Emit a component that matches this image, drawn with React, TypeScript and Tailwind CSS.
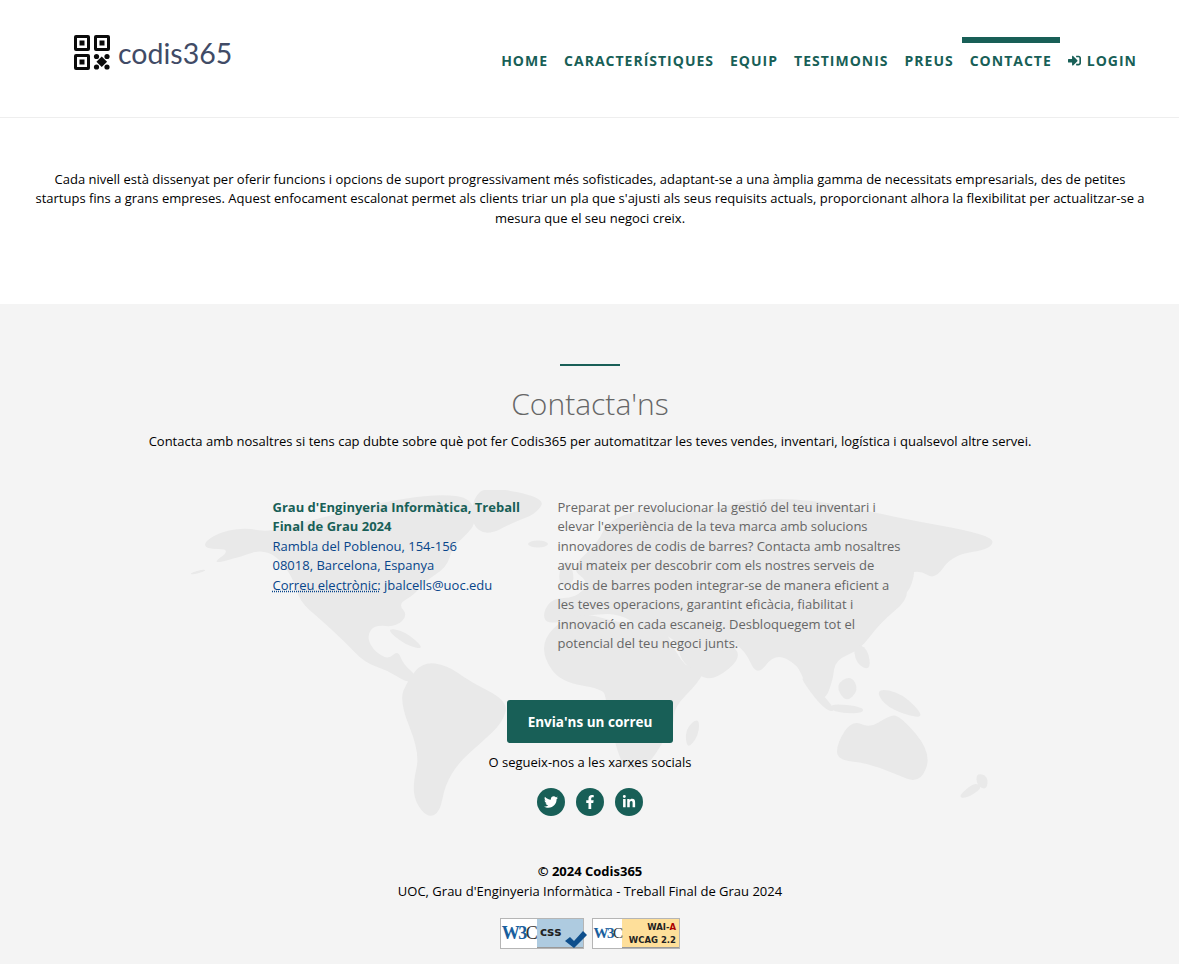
import React from "react";
import { FaFacebookF, FaLinkedinIn, FaSignInAlt, FaTwitter } from "react-icons/fa";

const navItems = ["HOME", "CARACTERÍSTIQUES", "EQUIP", "TESTIMONIS", "PREUS", "CONTACTE"];

const landShapes = [
  // North America
  "205,541 223,531 247,528 267,532 290,526 320,518 353,510 393,500 440,494 472,498 476,523 466,535 452,548 447,567 424,582 414,595 398,604 408,615 396,627 375,625 367,635 372,649 388,660 398,650 403,664 418,677 409,684 387,670 365,663 345,642 320,619 300,602 293,578 277,556 260,550 243,556 210,565 232,549 205,549",
  // Aleutians
  "190,573 204,569 206,571 192,575",
  // South America
  "408,680 423,662 447,665 469,681 508,701 503,722 482,742 459,762 445,785 440,812 428,818 415,802 413,783 420,753 399,701",
  // Greenland
  "473,498 487,486 546,498 536,514 514,522 487,536 471,524",
  // Eurasia
  "543,612 553,598 575,598 590,583 570,568 598,543 608,520 650,507 700,513 760,497 830,502 893,517 993,535 992,549 952,555 935,580 920,570 903,575 910,598 880,623 860,650 835,660 833,680 824,703 804,682 798,665 775,653 757,677 745,650 727,640 743,657 715,680 698,676 680,659 678,642 660,632 640,627 620,614 595,614 570,620 546,624",
  // Africa
  "544,638 544,659 561,682 603,689 606,699 615,745 626,772 647,767 665,739 674,725 674,707 699,682 706,666 689,670 674,650 665,628 640,625 615,622 590,614 563,619",
  // Madagascar
  "685,729 699,717 699,735 687,750",
  // Australia
  "837,743 852,720 870,728 887,717 899,714 932,753 920,784 893,773 867,763 837,760",
  // Indonesia and New Guinea
  "798,675 812,683 838,712 824,710",
  "830,703 864,707 862,714 832,712",
  "835,685 851,675 859,690 846,703",
  "876,688 902,693 926,718 905,715 883,704",
  "853,643 868,648 871,671 856,664",
  // Japan
  "896,592 908,567 916,570 908,595",
  // New Zealand
  "958,796 975,782 983,788 965,799",
  "976,773 988,776 987,790 977,786",
  // Cuba
  "385,628 405,631 426,650 405,645",
  // UK
  "558,572 568,557 576,582 561,588",
];

// rounds the corners of a land outline so the coast does not look spiky
function smoothPath(points: string) {
  const pts = points.split(" ").map((p) => p.split(",").map(Number));
  const mid = (a: number[], b: number[]) => `${(a[0] + b[0]) / 2},${(a[1] + b[1]) / 2}`;
  let d = `M${mid(pts[pts.length - 1], pts[0])}`;
  pts.forEach((p, i) => {
    d += ` Q${p[0]},${p[1]} ${mid(p, pts[(i + 1) % pts.length])}`;
  });
  return d + " Z";
}

function QrLogo() {
  const finders = [
    [0, 0],
    [20, 0],
    [0, 19],
  ];
  return (
    <svg width="36" height="35" viewBox="0 0 36 35" className="shrink-0">
      {finders.map(([x, y]) => (
        <g key={`${x}-${y}`}>
          <rect x={x} y={y} width="16" height="16" rx="2" fill="#0b0b0b" />
          <rect x={x + 3} y={y + 3} width="10" height="10" fill="#fff" />
          <rect x={x + 5.5} y={y + 5.5} width="5" height="5" fill="#0b0b0b" />
        </g>
      ))}
      <circle cx="22.5" cy="21.5" r="2.6" fill="#0b0b0b" />
      <circle cx="33" cy="21.5" r="2.6" fill="#0b0b0b" />
      <circle cx="22.5" cy="32" r="2.6" fill="#0b0b0b" />
      <circle cx="33" cy="32" r="2.6" fill="#0b0b0b" />
      <rect x="24" y="23" width="7.5" height="7.5" transform="rotate(45 27.75 26.75)" fill="#0b0b0b" />
    </svg>
  );
}

function W3cMark({ size }: { size: string }) {
  return (
    <span className={`flex items-center font-['Liberation_Serif',serif] font-bold tracking-[-1.5px] ${size}`}>
      <span className="text-[#1a5f9e]">W3</span>
      <span className="font-normal text-[#333]">C</span>
    </span>
  );
}

export default function App() {
  return (
    <div className="font-['Open_Sans',sans-serif] text-[13px] leading-[19.5px] text-black bg-white">
      {/* Header */}
      <header className="flex justify-between h-[118px] border-b border-[#eeeeee] pl-[74px] pr-[34px]">
        <a className="flex items-start gap-[8px] pt-[35px]">
          <QrLogo />
          <span className="font-['Lato',sans-serif] text-[28.5px] leading-[36px] text-[#414b66]">codis365</span>
        </a>
        <nav className="flex items-start pt-[37px] text-[14px] leading-[21px] font-bold tracking-[1px] text-[#185f57]">
          {navItems.map((item) => (
            <a
              key={item}
              className={`border-t-[6px] pt-[7px] px-[8px] ${item === "CONTACTE" ? "border-[#185f57]" : "border-transparent"}`}
            >
              {item}
            </a>
          ))}
          <a className="flex items-center gap-[6px] border-t-[6px] border-transparent pt-[7px] px-[8px]">
            <FaSignInAlt className="w-[13px] h-[13px]" />
            LOGIN
          </a>
        </nav>
      </header>

      {/* Intro */}
      <section className="pl-[31px] pr-[30px] pt-[51.5px] pb-[75.5px] text-center">
        <p>
          Cada nivell està dissenyat per oferir funcions i opcions de suport progressivament més sofisticades, adaptant-se a una àmplia gamma de necessitats empresarials, des de petites startups fins a grans empreses. Aquest enfocament escalonat permet als clients triar un pla que s'ajusti als seus requisits actuals, proporcionant alhora la flexibilitat per actualitzar-se a mesura que el seu negoci creix.
        </p>
      </section>

      {/* Contact */}
      <footer className="relative bg-[#f4f4f4] pt-[60px] pb-[15px] text-center">
        <svg
          width="820"
          height="340"
          viewBox="180 490 820 340"
          className="absolute left-[180px] top-[186px]"
        >
          {landShapes.map((points) => (
            <path key={points} d={smoothPath(points)} fill="#e9e9e9" />
          ))}
          <ellipse cx="538" cy="544" rx="10" ry="3.5" fill="#e9e9e9" />
        </svg>

        <div className="relative pl-[1px]">
          <div className="mx-auto w-[60px] h-[2px] bg-[#185f57]" />
          <h2 className="mt-[15px] text-[30px] leading-[45px] font-light text-[#666666]">Contacta'ns</h2>
          <p className="mt-[6px]">
            Contacta amb nosaltres si tens cap dubte sobre què pot fer Codis365 per automatitzar les teves vendes, inventari, logística i qualsevol altre servei.
          </p>

          <div className="mt-[46.5px] flex justify-center gap-[30px] text-left">
            <div className="w-[255px] text-[#07458a]">
              <p className="font-bold text-[#185f57]">Grau d'Enginyeria Informàtica, Treball Final de Grau 2024</p>
              <p>Rambla del Poblenou, 154-156</p>
              <p>08018, Barcelona, Espanya</p>
              <p>
                <abbr className="underline decoration-dotted">Correu electrònic:</abbr> jbalcells@uoc.edu
              </p>
            </div>
            <p className="w-[350px] text-[#666666]">
              Preparat per revolucionar la gestió del teu inventari i elevar l'experiència de la teva marca amb solucions innovadores de codis de barres? Contacta amb nosaltres avui mateix per descobrir com els nostres serveis de codis de barres poden integrar-se de manera eficient a les teves operacions, garantint eficàcia, fiabilitat i innovació en cada escaneig. Desbloquegem tot el potencial del teu negoci junts.
            </p>
          </div>

          <button className="mt-[46px] h-[43px] w-[166px] rounded-[3px] bg-[#185f57] pt-[4px] text-[13.5px] font-bold text-white">
            Envia'ns un correu
          </button>
          <p className="mt-[10px]">O segueix-nos a les xarxes socials</p>

          <div className="mt-[16px] flex justify-center gap-[11px]">
            {[FaTwitter, FaFacebookF, FaLinkedinIn].map((Icon, i) => (
              <a key={i} className="flex w-[28px] h-[28px] items-center justify-center rounded-full bg-[#185f57] text-white">
                <Icon className="w-[14px] h-[14px]" />
              </a>
            ))}
          </div>

          <p className="mt-[46px] font-bold">© 2024 Codis365</p>
          <p>UOC, Grau d'Enginyeria Informàtica - Treball Final de Grau 2024</p>

          <div className="mt-[17px] flex justify-center gap-[8px]">
            {/* W3C CSS badge */}
            <a className="flex w-[84px] h-[31px] border border-[#b5b5b5] bg-[#aecbe0] shadow-[inset_0_-1px_0_#999]">
              <span className="flex w-[36px] items-center justify-center bg-white">
                <W3cMark size="text-[18px]" />
              </span>
              <span className="relative flex-1 pl-[3px] text-left font-['DejaVu_Sans',sans-serif] text-[12px] leading-[26px] font-bold text-[#222]">
                css
                <svg width="22" height="19" viewBox="0 0 22 19" className="absolute right-[-4px] bottom-[-1px]">
                  <path d="M0 11 L5 7 L9 11 L18 1 L22 5 L9 18 Z" fill="#0f4f8c" />
                </svg>
              </span>
            </a>
            {/* W3C WAI badge */}
            <a className="flex w-[88px] h-[31px] border border-[#b5b5b5] bg-[#fedf9a] shadow-[inset_0_-1px_0_#999]">
              <span className="flex w-[29px] items-center justify-center bg-white">
                <W3cMark size="text-[15px]" />
              </span>
              <span className="flex-1 pr-[3px] pt-[2px] text-right font-['DejaVu_Sans',sans-serif] text-[8.5px] leading-[13px] font-bold text-[#222]">
                <span className="block">
                  WAI-<span className="text-[#a00]">A</span>
                </span>
                <span className="block">WCAG 2.2</span>
              </span>
            </a>
          </div>
        </div>
      </footer>
    </div>
  );
}
